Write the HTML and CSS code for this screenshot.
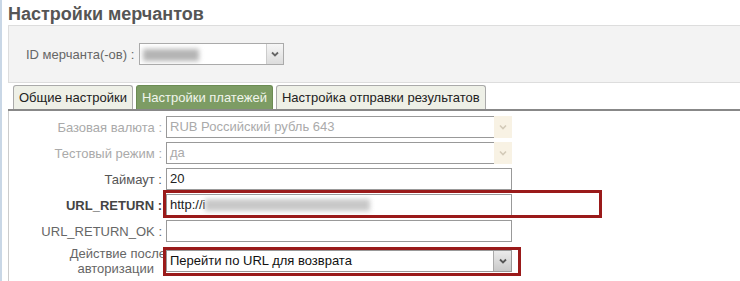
FILE: index.html
```html
<!DOCTYPE html>
<html lang="ru">
<head>
<meta charset="utf-8">
<title>Настройки мерчантов</title>
<link rel="stylesheet" href="styles.css">
</head>
<body>
<div class="page">
  <h1 class="title">Настройки мерчантов</h1>
  <div class="filter">
    <span class="filter-label">ID мерчанта(-ов) :</span>
    <div class="select select-id">
      <span class="select-value"><span class="blur blur-id"></span></span>
      <span class="arrow"><svg width="8" height="6" viewBox="0 0 8 6"><path d="M1 1.5 L4 4.5 L7 1.5" fill="none" stroke="#666" stroke-width="1.8"/></svg></span>
    </div>
  </div>
  <div class="tabs">
    <div class="tab">Общие настройки</div>
    <div class="tab active">Настройки платежей</div>
    <div class="tab">Настройка отправки результатов</div>
  </div>
  <div class="content">
    <div class="row">
      <div class="label disabled">Базовая валюта :</div>
      <div class="dsel">
        <div class="dsel-value">RUB Российский рубль 643</div>
        <div class="dsel-arrow"><svg width="8" height="6" viewBox="0 0 8 6"><path d="M1 1.5 L4 4.5 L7 1.5" fill="none" stroke="#d3cab8" stroke-width="1.6"/></svg></div>
      </div>
    </div>
    <div class="row">
      <div class="label disabled">Тестовый режим :</div>
      <div class="dsel">
        <div class="dsel-value">да</div>
        <div class="dsel-arrow"><svg width="8" height="6" viewBox="0 0 8 6"><path d="M1 1.5 L4 4.5 L7 1.5" fill="none" stroke="#d3cab8" stroke-width="1.6"/></svg></div>
      </div>
    </div>
    <div class="row">
      <div class="label label-timeout">Таймаут :</div>
      <div class="field">20</div>
    </div>
    <div class="row">
      <div class="label label-strong">URL_RETURN :</div>
      <div class="field">http://i<span class="blur blur-url"></span></div>
    </div>
    <div class="row">
      <div class="label">URL_RETURN_OK :</div>
      <div class="field"></div>
    </div>
    <div class="row row-tall">
      <div class="label label-tall"><span class="l1">Действие после</span><br><span class="l2">авторизации</span></div>
      <div class="select select-action">
        <span class="select-value">Перейти по URL для возврата</span>
        <span class="arrow arrow-action"><svg width="8" height="6" viewBox="0 0 8 6"><path d="M1 1.5 L4 4.5 L7 1.5" fill="none" stroke="#555" stroke-width="1.8"/></svg></span>
      </div>
    </div>
    <div class="mark mark-1"></div>
    <div class="mark mark-2"></div>
  </div>
</div>
</body>
</html>
```
FILE: styles.css
```css
html, body {
  margin: 0;
  background: #fff;
}
body {
  font-family: "Liberation Sans", Arial, sans-serif;
  font-size: 13px;
  color: #333;
}
.page {
  border-left: 2px solid #c9d7e6;
  padding-left: 6px;
  min-height: 281px;
  box-sizing: border-box;
  overflow: hidden;
}
.title {
  margin: 0;
  padding-top: 3px;
  font-size: 18px;
  line-height: 22px;
  font-weight: bold;
  color: #555;
}
.filter {
  display: flex;
  align-items: center;
  height: 56px;
  padding-left: 17px;
  background: #f3f3f3;
  border: 1px solid #ddd;
  border-right: none;
}
.filter-label {
  color: #666;
  margin-right: 5px;
}
.select {
  display: flex;
  height: 22px;
  box-sizing: border-box;
  border: 1px solid #aaa;
  background: #fff;
}
.select-id {
  width: 145px;
}
.select-value {
  flex: 1;
  padding-left: 3px;
  line-height: 20px;
  color: #222;
  white-space: nowrap;
  overflow: hidden;
}
.arrow {
  width: 16px;
  display: flex;
  align-items: center;
  justify-content: center;
  border-left: 1px solid #ccc;
  background: linear-gradient(#f6f6f6, #dcdcdc);
}
.blur {
  display: inline-block;
  height: 12px;
  vertical-align: middle;
  filter: blur(2.5px);
}
.blur-id {
  width: 56px;
  background: #b4b4b4;
}
.blur-url {
  width: 165px;
  background: #c8c8c8;
  margin-top: -2px;
}
.tabs {
  display: flex;
  gap: 3px;
  margin-top: 2px;
  padding-left: 5px;
  border-bottom: 2px solid #888;
}
.tab {
  height: 24px;
  box-sizing: border-box;
  padding: 0 5px;
  line-height: 23px;
  border: 1px solid #aaa;
  border-bottom: none;
  border-radius: 3px 3px 0 0;
  background: #eef0e7;
  color: #222;
  white-space: nowrap;
}
.tab.active {
  background: #7d9c64;
  border-color: #6b8b53;
  color: #f1f5ec;
}
.content {
  position: relative;
  border-left: 1px solid #ccc;
  padding-top: 5px;
  min-height: 170px;
}
.row {
  display: flex;
  align-items: center;
  height: 22px;
  margin-bottom: 4px;
}
.row-tall {
  height: 30px;
}
.label {
  width: 157px;
  box-sizing: border-box;
  padding-right: 4px;
  text-align: right;
  color: #666;
  white-space: nowrap;
}
.label.disabled {
  color: #aaa;
}
.label-timeout {
  color: #555;
}
.label-strong {
  font-weight: bold;
  color: #444;
}
.label-tall {
  line-height: 15px;
}
.label-tall .l1 {
  margin-right: -4px;
}
.label-tall .l2 {
  padding-right: 8px;
}
.field {
  width: 346px;
  height: 22px;
  box-sizing: border-box;
  border: 1px solid #999;
  padding: 0 3px;
  line-height: 20px;
  color: #222;
  white-space: nowrap;
  overflow: hidden;
}
.dsel {
  display: flex;
  width: 346px;
  height: 22px;
}
.dsel-value {
  flex: 1;
  box-sizing: border-box;
  border: 1px solid #999;
  border-right: none;
  padding: 0 3px;
  line-height: 20px;
  color: #aaa;
}
.dsel-arrow {
  width: 18px;
  display: flex;
  align-items: center;
  justify-content: center;
  background: #f8f2e4;
}
.select-action {
  width: 346px;
  border-color: #999;
}
.select-action .select-value {
  color: #111;
}
.arrow-action {
  width: 17px;
  border-left: 1px solid #aaa;
  background: linear-gradient(#ebebeb, #c9c9c9);
}
.mark {
  position: absolute;
  box-sizing: border-box;
  border: 3px solid #9a1a1a;
}
.mark-1 {
  left: 154px;
  top: 79px;
  width: 439px;
  height: 28px;
}
.mark-2 {
  left: 154px;
  top: 136px;
  width: 358px;
  height: 29px;
}
```
